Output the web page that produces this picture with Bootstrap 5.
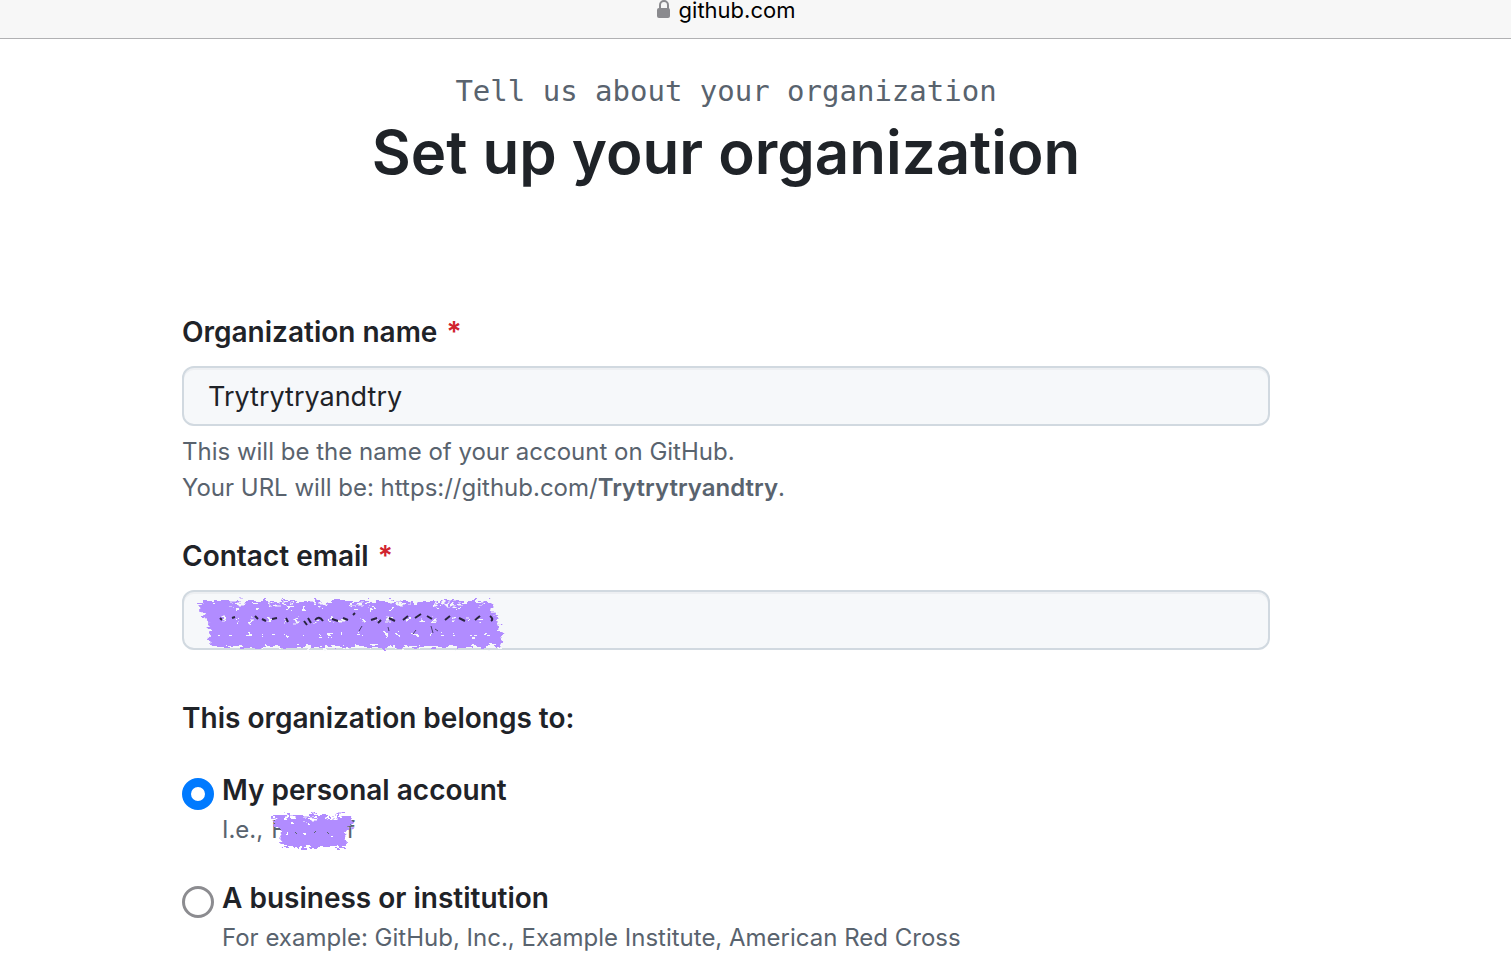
<!DOCTYPE html>
<html lang="en">
<head>
<meta charset="utf-8">
<meta name="viewport" content="width=device-width, initial-scale=1">
<title>Set up your organization</title>
<link href="https://cdn.jsdelivr.net/npm/bootstrap@5.3.0/dist/css/bootstrap.min.css" rel="stylesheet">
<style>
  body { font-family: Inter, "Liberation Sans", sans-serif; color: #1f2328; background: #fff; font-size: 28px; line-height: 36px; }
  .page-gutter { padding-right: 59px; }
  .address-bar { background: #f7f7f7; border-bottom: 1px solid #b1b1b3; padding-bottom: 18px; color: #000; font-size: 22px; line-height: 20px; gap: 8px; }
  .setup { max-width: 1088px; padding-top: 31px; }
  .eyebrow { font-family: "DejaVu Sans Mono", monospace; font-size: 29px; color: #59636e; line-height: 42px; }
  .headline { font-size: 60px; font-weight: 600; line-height: 80px; margin-bottom: 122px; }
  .field-title { font-size: 28px; font-weight: 600; line-height: 36px; }
  .required { color: #d1242f; margin-left: 2px; }
  .field-box { height: 60px; padding: 0 24px; font-size: 27px; color: #1f2328; background: #f6f8fa; border: 2px solid #d1d9e0; border-radius: 12px; box-shadow: inset 0 2px 0 rgba(31,35,40,.04); }
  .field-box:focus { background: #f6f8fa; }
  .hint { color: #59636e; font-size: 24px; line-height: 36px; }
  .group-title { margin-top: 50px; margin-bottom: 36px; }
  .choice { gap: 8px; margin-bottom: 32px; }
  .choice .form-check-input { width: 32px; height: 32px; margin-top: 6px; border: 3px solid #8c8c90; background-color: #fff; }
  .choice .form-check-input:checked { border: 9px solid #007aff; background-color: #fff; background-image: none; }
  .scribble { position: absolute; pointer-events: none; }
  .scribble-email { left: 14px; top: 6px; }
  .scribble-name { left: -2px; top: -1px; }
  .masked { width: 84px; }
</style>
</head>
<body>
<header class="address-bar page-gutter d-flex justify-content-center align-items-center">
  <svg width="14" height="20" viewBox="0 0 14 20" aria-hidden="true"><path d="M3 9V5a4 4 0 0 1 8 0V9" fill="none" stroke="#8a8a8e" stroke-width="2"/><rect x="0" y="8" width="13" height="10" rx="2" fill="#8a8a8e"/></svg>
  <span>github.com</span>
</header>

<div class="page-gutter">
<main class="setup mx-auto">
  <div class="text-center">
    <p class="eyebrow mb-0">Tell us about your organization</p>
    <h1 class="headline">Set up your organization</h1>
  </div>

  <form>
    <div>
      <label class="field-title d-block mb-3" for="org-name">Organization name <span class="required">*</span></label>
      <input class="field-box form-control" id="org-name" type="text" value="Trytrytryandtry">
      <p class="hint mt-2 mb-0">This will be the name of your account on GitHub.<br>Your URL will be: https://github.com/<strong class="fw-semibold">Trytrytryandtry</strong>.</p>
    </div>

    <div class="mt-4 pt-2">
      <label class="field-title d-block mb-3" for="email">Contact email <span class="required">*</span></label>
      <div class="position-relative">
        <input class="field-box form-control" id="email" type="email">
        <svg class="scribble scribble-email" width="312" height="56" viewBox="0 0 312 56" aria-hidden="true">
          <defs>
            <filter id="chalk" x="-5%" y="-15%" width="110%" height="130%">
              <feTurbulence type="fractalNoise" baseFrequency="0.12 0.3" numOctaves="2" seed="7" result="grain"/>
              <feDisplacementMap in="SourceGraphic" in2="grain" scale="12" xChannelSelector="R" yChannelSelector="G"/>
            </filter>
          </defs>
          <g filter="url(#chalk)">
            <path d="M4 5H294L298 16L302 22L307 51H15L12 26L6 18Z" fill="#b18cff"/>
            <path d="M35 7h16M72 8h26M116 7h18M155 8h22M194 7h28M239 8h30M283 7h6" stroke="#f6f8fa" stroke-width="3" stroke-dasharray="3 4 6 3"/>
            <path d="M40 13h240" stroke="#f6f8fa" stroke-width="2" stroke-dasharray="3 17 2 29 4 12"/>
            <path d="M26 24h266" stroke="#f6f8fa" stroke-width="3" stroke-dasharray="3 12 2 9 4 16"/>
            <path d="M20 39h278" stroke="#f6f8fa" stroke-width="2" stroke-dasharray="4 9 2 15 5 12 2 7"/>
            <path d="M16 51h290" stroke="#f6f8fa" stroke-width="2" stroke-dasharray="3 11 5 17 4 8"/>
          </g>
          <path d="M24 22l2 2M36 22l3-1M59 20l3 3M66 23l4 2M76 23l5-1M90 22l2 4M108 25l3 4M112 22l3 5M119 24q4-5 8 1M136 23l6 2M147 22l5 2M157 19l2-2M175 24l6-2M182 27l3-3M193 22l6 3M207 24l5-4M219 22l6-4M231 20l5 3M249 24l5-4M263 22l6 3M279 24l5-4M294 20q4 3 1 5" fill="none" stroke="#29243e" stroke-width="2"/>
          <path d="M163 35l3-5M217 38l3-4M235 30l2 7M192 31l1 4M239 33l3 2" fill="none" stroke="#49406f"/>
        </svg>
      </div>
    </div>

    <fieldset>
      <legend class="group-title field-title">This organization belongs to:</legend>
      <div class="choice d-flex">
        <input class="form-check-input flex-shrink-0" type="radio" name="owner" id="personal" checked>
        <div>
          <label class="field-title d-block mb-1" for="personal">My personal account</label>
          <div class="hint d-flex gap-2"><span>I.e.,</span>
            <span class="masked position-relative d-flex justify-content-between"><span>F</span><span>f</span>
              <svg class="scribble scribble-name" width="88" height="42" viewBox="0 0 88 42" aria-hidden="true">
                <g filter="url(#chalk)">
                  <path d="M5 4H81L84 15L76 19L77 36H13L10 20L6 12Z" fill="#b18cff"/>
                  <path d="M16 6h9M36 7h12M57 6h18" stroke="#fff" stroke-width="3" stroke-dasharray="3 3 5 3"/>
                  <path d="M22 12h40M18 24h56" stroke="#fff" stroke-width="2" stroke-dasharray="3 14 2 21"/>
                </g>
                <path d="M26 21l2 2M45 22l2-2M58 21l2 2" stroke="#59636e"/>
              </svg>
            </span>
          </div>
        </div>
      </div>
      <div class="choice d-flex mb-0">
        <input class="form-check-input flex-shrink-0" type="radio" name="owner" id="business">
        <div>
          <label class="field-title d-block mb-1" for="business">A business or institution</label>
          <p class="hint mb-0">For example: GitHub, Inc., Example Institute, American Red Cross</p>
        </div>
      </div>
    </fieldset>
  </form>
</main>
</div>
<script src="https://cdn.jsdelivr.net/npm/bootstrap@5.3.0/dist/js/bootstrap.bundle.min.js"></script>
</body>
</html>
